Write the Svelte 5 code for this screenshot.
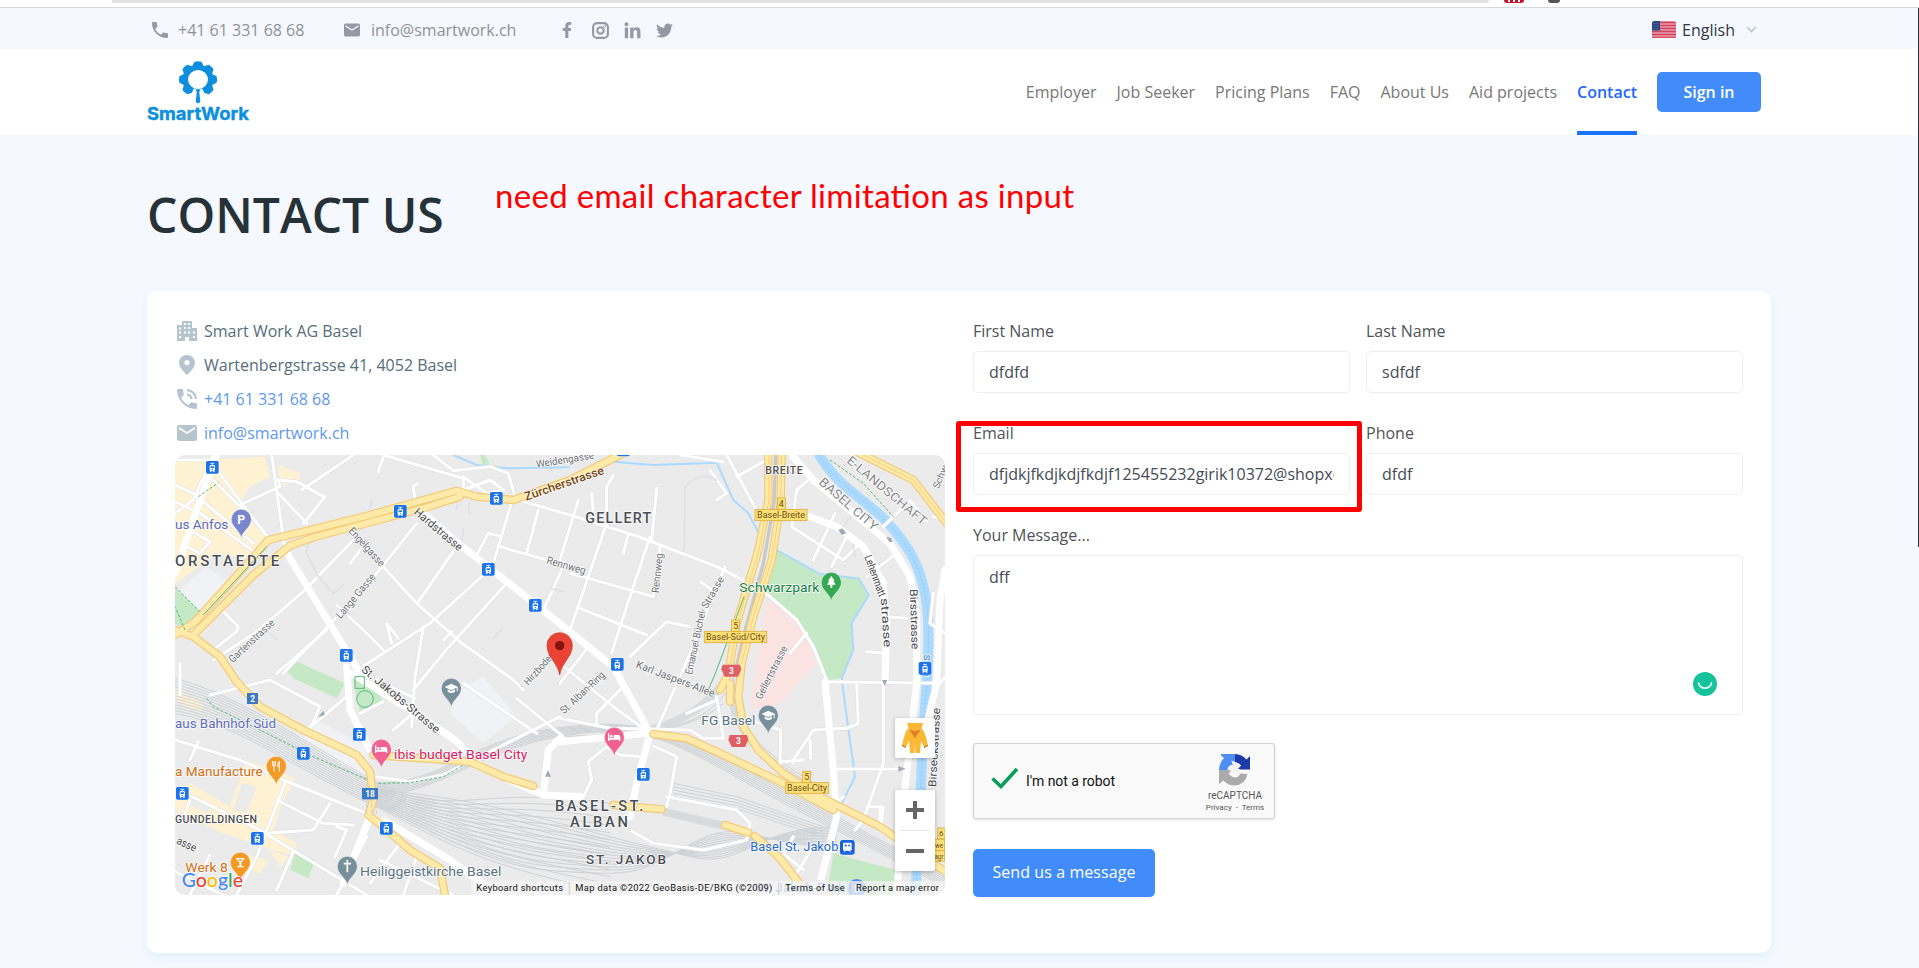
<script>
  const nav = ['Employer', 'Job Seeker', 'Pricing Plans', 'FAQ', 'About Us', 'Aid projects'];

  // Map geometry is drawn on a 2310 x 1320 canvas.
  const minor = [
    'M15 30L120 30L215 160L300 270', 'M130 90L230 190', 'M15 105L70 130L250 280', 'M15 155L90 190L260 310',
    'M15 190L70 150L130 15', 'M60 240L120 275L90 310L50 290', 'M210 165L330 110L325 90L380 95L460 140', 'M305 15L345 300',
    'M325 130L410 220', 'M395 120L550 15', 'M400 222L465 140', 'M640 15L880 85L880 130', 'M790 15L850 62L960 50L1015 70L1035 140',
    'M640 20L625 65', 'M735 150L730 110L742 100', 'M540 215L540 245L640 350L740 460L870 575L1030 690L1060 720',
    'M740 220L600 395L340 670', 'M550 270L400 425L260 545L130 630', 'M30 640L30 735', 'M150 475L205 530L200 545L135 595',
    'M470 540L320 670', 'M540 340L575 295', 'M570 655L780 520L940 375', 'M745 455L860 290', 'M760 530L735 680L725 830',
    'M640 600L580 540L500 465', 'M685 565L650 520L665 580', 'M820 570L845 545',
    'M1030 140L970 340', 'M915 325L955 250L995 260', 'M1105 180L1070 310', 'M990 290L1200 350', 'M1180 350L1120 480',
    'M1045 150L1200 195L1400 258L1640 350L1740 400L1800 440L1880 510L1930 590L1970 690', 'M1010 400L820 610L730 720',
    'M1200 370L1290 395L1450 440', 'M1225 150L1170 330', 'M1310 220L1200 540', 'M1440 260L1350 530L1325 610',
    'M1460 115L1445 270', 'M1265 130L1270 190', 'M1330 75L1310 110L1310 180', 'M1375 250L1360 310', 'M1470 290L1450 440',
    'M1230 475L1430 555', 'M1380 620L1490 515L1560 530', 'M1255 590L1170 700', 'M1665 350L1560 610L1460 840',
    'M1592 395L1640 430', 'M1670 15L1770 200L1790 190', 'M1530 15L1660 35', 'M1700 80L1790 30',
    'M1920 85L1880 120L1865 230L2020 330L2060 290', 'M1995 190L1930 330', 'M2030 260L1985 350', 'M2090 380L2180 310',
    'M2140 230L2220 150L2270 215', 'M2150 500L2210 505', 'M2090 605L2150 610', 'M1860 610L1910 550',
    'M1960 695L2310 700L2325 680', 'M2060 705L2065 820L2030 835L1930 840L1870 930L1870 940', 'M1920 870L1922 925',
    'M2140 700L2140 940L2080 1110L2055 1140', 'M1990 957L2210 957', 'M2000 1060L2020 1040', 'M2090 1070L2140 1070L2135 1120',
    'M1640 740L1660 865L1600 865L1560 840L1320 835L1170 805', 'M1170 640L1330 770L1440 850', 'M1550 790L1640 750',
    'M1280 825L1280 790L1360 710', 'M1450 888L1520 920L1500 1030L1490 1070', 'M1420 920L1350 915L1310 890L1255 935L1265 990L1240 1040',
    'M1490 1040L1700 1080L1740 1120L1730 1170L1600 1200L1450 1180L1380 1140', 'M1740 810L1832 840L1830 945', 'M1830 935L1900 930',
    'M120 735L300 690L450 770L415 850', 'M620 690L735 745', 'M15 870L210 930L340 990L590 1090', 'M85 875L60 930',
    'M15 1015L260 1135L590 1335', 'M345 1000L260 1220L200 1335', 'M320 1050L460 1120L550 1125', 'M480 1060L430 1140L290 1150',
    'M500 1130L530 1140L495 1220', 'M370 1205L320 1320', 'M590 1160L560 1220L500 1335', 'M690 1180L600 1300', 'M740 1220L700 1335',
    'M15 1265L160 1335', 'M120 1215L60 1335', 'M60 1050L40 1105', 'M630 1230L850 1335',
    'M570 790L640 755', 'M410 840L530 740', 'M880 80L950 130L1000 120L960 90L880 120', 'M1620 60L1670 130L1640 150',
    'M670 840L740 780', 'M1040 745L1180 860', 'M880 700L1100 850', 'M960 905L1170 800', 'M620 980L720 995L820 975L870 950L850 900',
    'M1870 1160L1840 1210L1900 1260', 'M1930 1190L1880 1270', 'M2325 550L2280 520L2290 430', 'M2290 200L2325 205', 'M2130 1110L2130 1070'
  ];
  const major = [
    'M345 300L500 555L590 700', 'M15 370L80 180L140 15', 'M740 170L840 260L1080 450L1200 545L1330 650L1440 850L1400 1000L1380 1100',
    'M530 650L540 780L600 900', 'M545 670L720 780L855 870L940 955L1120 1035L1230 1040', 'M600 1100L520 1300',
    'M1170 865L1135 900L1120 1035', 'M1920 200L2000 230L2080 290L2140 400L2150 520L2145 690', 'M1870 20L1930 90L2160 280L2220 380L2240 500L2240 700L2200 1060L2180 1335',
    'M1170 875L1430 850', 'M1965 695L1990 960L2000 1100L1950 1300', 'M2325 360L2310 450L2300 700L2250 900', 'M640 1110L840 1230L990 1335'
  ];
  const yellow = [
    'M15 555L75 515L180 400L295 270L420 240L600 195L860 122L920 140L1030 150L1200 90L1370 5',
    'M75 550L160 465L250 375L360 287L430 262L600 217L760 175L870 140',
    'M15 540L70 560L150 620L200 695L270 770L400 840L560 915L600 965L610 1050L595 1095L640 1130L720 1200L810 1255L825 1335',
    'M610 915L900 935L1000 980L1090 1008',
    'M1795 10L1795 150L1765 300L1700 520L1675 670L1650 720',
    'M1835 10L1832 160L1805 330L1750 500L1715 640L1705 740L1720 830L1765 900L1840 970L1950 1040L2130 1130L2325 1265',
    'M1450 852L1550 865L1650 910L1820 990L1990 1080', 'M1680 700L1680 755',
    'M1330 1065L1475 1078', 'M1665 1125L1735 1148', 'M1755 1158L1830 1225L1900 1315',
    'M2060 5L2230 90L2330 220'
  ];

  const rails = [];
  for (let i = 0; i < 13; i++) {
    const o = i * 8;
    rails.push(`M15 ${685 + o * 1.1}C200 ${735 + o * .9} 360 ${850 + o} 600 ${985 + o * .8}S900 ${1000 + i * 20} 1320 ${1060 + i * 22}`);
  }
  for (let i = 0; i < 8; i++) {
    rails.push(`M620 ${1000 + i * 5}C820 ${1000 + i * 4} 900 ${870 + i * 6} 1150 ${835 + i * 4}S1500 ${840 + i * 4} 1700 ${940 + i * 6}S2100 ${1160 + i * 4} 2325 ${1270 + i * 6}`);
  }
  for (let i = 0; i < 13; i++) {
    rails.push(`M620 ${1020 + i * 4}C800 ${1035 + i * 9} 950 ${1060 + i * 16} 1170 ${1120 + i * 12}S1400 ${1180 + i * 8} 1560 ${1220 - i * 3}S1750 ${1130 + i * 5} 2000 ${1130 + i * 5}`);
  }
  for (let i = 0; i < 5; i++) rails.push(`M1510 ${1000 + i * 10}L1700 ${1040 + i * 9}L1960 ${1130 + i * 8}`);
  rails.push('M1170 860C1400 850 1550 850 1640 760S1680 600 1690 660', 'M1190 870C1400 860 1570 840 1660 760', 'M1690 650C1690 850 1780 910 1900 990', 'M1700 720C1710 860 1800 920 1950 1010');

  const trams = [[127, 52], [691, 184], [979, 145], [955, 358], [1096, 466], [529, 616], [568, 853], [400, 910], [37, 1030], [262, 1165], [649, 1135], [1342, 643], [1420, 973], [1360, 0], [2265, 655]];

  // x, y, rotation, text, class, size, length
  const labels = [
    [15, 236, 0, 'us Anfos', 'transit', 34, 160], [15, 348, 0, 'ORSTAEDTE', 'area', 40, 313],
    [188, 640, -43, 'Gartenstrasse', 'road', 28, 175], [512, 508, -50, 'Lange Gasse', 'road', 28, 165],
    [534, 244, 48, 'Engelgasse', 'road', 28, 145], [730, 190, 40, 'Hardstrasse', 'road dark', 30, 178],
    [1068, 152, -19, 'Zürcherstrasse', 'brown', 31, 250], [1100, 53, -9, 'Weidengasse', 'road', 27, 175],
    [1128, 340, 16, 'Rennweg', 'road', 28, 120], [1466, 430, -84, 'Rennweg', 'road', 27, 120],
    [1246, 220, 0, 'GELLERT', 'area', 38, 198], [1786, 71, 0, 'BREITE', 'small', 28, 112],
    [1944, 100, 41, 'BASEL CITY', 'district', 34, 220], [2028, 35, 40, 'E-LANDSCHAFT', 'district', 32, 300],
    [2306, 118, -67, 'Schw', 'road', 26, 72], [1708, 427, 0, 'Schwarzpark', 'park', 36, 240],
    [1566, 675, -78, 'Emanuel Büchel-', 'road', 27, 200], [1611, 478, -60, 'Strasse', 'road', 27, 105],
    [1774, 750, -63, 'Gellertstrasse', 'road', 27, 175], [2083, 320, 70, 'Lehenmatt', 'road dark', 29, 130],
    [2132, 445, 86, 'strasse', 'road dark', 29, 148], [2219, 418, 88, 'Birsstrasse', 'road dark', 29, 180],
    [2275, 680, -86, 'Birs', 'water', 30, 66], [1075, 707, -48, 'Hirzbodenweg', 'road', 27, 170],
    [1182, 793, -43, 'St. Alban-Ring', 'road', 27, 170], [1396, 652, 21, 'Karl Jaspers-Allee', 'road', 28, 250],
    [572, 662, 40, 'St. Jakobs-Strasse', 'road dark', 30, 295], [15, 833, 0, 'aus Bahnhof Süd', 'transit', 34, 303],
    [15, 978, 0, 'a Manufacture', 'food', 34, 263], [15, 1119, 0, 'GUNDELDINGEN', 'small', 28, 246],
    [17, 1180, 25, 'asse', 'road dark', 30, 62], [46, 1266, 0, 'Werk 8', 'food', 34, 127],
    [672, 928, 0, 'ibis budget Basel City', 'hotel', 35, 400], [570, 1278, 0, 'Heiliggeistkirche Basel', 'place', 34, 424],
    [1594, 824, 0, 'FG Basel', 'place', 34, 162], [1155, 1084, 0, 'BASEL-ST.', 'area', 39, 265],
    [1200, 1132, 0, 'ALBAN', 'area', 39, 174], [1248, 1243, 0, 'ST. JAKOB', 'area', 36, 240],
    [1741, 1203, 0, 'Basel St. Jakob', 'station', 34, 264], [1755, 1326, 0, 'St. Jakob-Park', 'station', 34, 270],
    [2298, 1012, -87, 'Birseckstrasse', 'road dark', 29, 238]
  ];
  const exits = [[1755, 178, 156, 34, 'Basel-Breite', 27], [1822, 144, 24, 34, '4', 27], [1603, 544, 187, 34, 'Basel-Süd/City', 27], [1685, 510, 24, 34, '5', 27], [1847, 998, 128, 32, 'Basel-City', 27], [1898, 964, 24, 34, '5', 27], [2303, 1134, 22, 32, '6', 24], [2290, 1168, 34, 34, 'we', 19], [2290, 1202, 34, 32, 'agr', 19]];
  const pins = [
    [214, 208, '#7986cb', 'P'], [844, 715, '#78909c', 'cap'], [634, 898, '#f06292', 'bed'], [319, 949, '#f29926', 'fork'],
    [211, 1237, '#f29926', 'glass'], [532, 1249, '#78909c', 'cross'], [1984, 397, '#34a853', 'tree'], [1795, 796, '#78909c', 'cap'], [1333, 862, '#f06292', 'bed']
  ];
</script>

{#snippet mail(w, h)}
  <svg width={w} height={h} viewBox="2 4 20 16"><path d="M20 4H4c-1.100 0-2 .9-2 2v12c0 1.100.9 2 2 2h16c1.100 0 2-.9 2-2V6c0-1.100-.9-2-2-2zm0 4l-8 5-8-5V6l8 5 8-5z" /></svg>
{/snippet}

<div class="browser"><div class="address"></div><i class="ext red"></i><i class="ext gray"></i></div>

<div class="topbar">
  <div class="wrap bar">
    <span class="phone"><svg width="16" height="16" viewBox="3 3 18 18"><path d="M6.620 10.790c1.440 2.830 3.760 5.140 6.590 6.590l2.200-2.200c.27-.27.67-.36 1.020-.24 1.120.37 2.330.57 3.570.57.55 0 1 .45 1 1V20c0 .55-.45 1-1 1-9.390 0-17-7.610-17-17 0-.55.45-1 1-1h3.500c.55 0 1 .45 1 1 0 1.250.2 2.450.57 3.570.11.35.03.74-.25 1.020z" /></svg>+41 61 331 68 68</span>
    <span class="email">{@render mail(16, 14)}info@smartwork.ch</span>
    <span class="social">
      <svg width="10" height="16" viewBox="0 0 320 512"><path d="M279 288l14-93h-89v-60c0-25 12-50 52-50h41V7s-37-7-72-7c-73 0-121 45-121 125v70H23v93h81v224h100V288z" /></svg>
      <svg width="17" height="17" viewBox="0 0 17 17" class="line"><rect x="1.100" y="1.100" width="14.800" height="14.800" rx="4" /><circle cx="8.500" cy="8.500" r="3.200" /><circle cx="12.700" cy="4.300" r=".3" /></svg>
      <svg width="17" height="17" viewBox="0 0 448 480"><path d="M100 460H7V155h93zM54 120a58 58 0 1 1 0-116 58 58 0 0 1 0 116zM448 460h-93V308c0-34-1-79-48-79-49 0-56 38-56 77v154h-93V155h89v41h1c13-24 43-48 88-48 94 0 112 62 112 142z" /></svg>
      <svg width="17" height="17" viewBox="0 0 512 512"><path d="M459 152c0 4 0 9 0 13 0 139-105 299-298 299-59 0-114-17-160-47 8 1 16 1 25 1 49 0 94-16 130-44-46-1-85-31-98-73 6 1 13 1 20 1 9 0 19-1 28-3-48-10-84-53-84-104v-1c14 8 30 13 47 13-28-19-46-51-46-87 0-19 5-37 14-53 52 64 129 105 216 110-2-8-3-16-3-24C250 95 297 48 355 48c30 0 57 13 77 33 24-5 46-13 66-25-8 24-24 45-46 58 21-2 41-8 60-16-14 21-32 39-53 54z" /></svg>
    </span>
    <span class="lang">
      <svg width="24" height="17" viewBox="0 0 24 17"><rect width="24" height="17" rx="2.500" fill="#e98a9b" />{#each [1, 4, 7, 10, 13] as y}<path d={`M0 ${y + .5}H24`} stroke="#cf4660" stroke-width="1.200" />{/each}<path d="M0 16.300H24" stroke="#cf4660" /><path d="M0 2.500Q0 0 2.500 0H8V9.500H0z" fill="#2b477f" /><path d="M1.500 2.500H7M1.500 5H7M1.500 7.500H7" stroke="#7185ac" stroke-width=".7" stroke-dasharray="1" /></svg>
      English
      <svg width="11" height="7" viewBox="0 0 11 7" class="chev"><path d="M1 1l4.500 4.500L10 1" /></svg>
    </span>
  </div>
</div>

<header>
  <div class="wrap head">
    <svg class="logo" width="104" height="66" viewBox="0 0 104 66">
      <g transform="translate(51 21.500) scale(1.050 1)" fill="#0d8fdd">
        <circle r="12" fill="none" stroke="#0d8fdd" stroke-width="5" />
        {#each [0, 45, 90, 135, -45, -90, -135] as a}<path transform={`rotate(${a})`} d="M-6 -12.500L-3.300 -17.700Q0 -18.600 3.300 -17.700L6 -12.500z" />{/each}
        <path d="M-8 18L-4 9H4L8 18z" fill="#fff" />
        <path d="M-2.400 9.700H2.400L1.200 12.500L2.200 22.500L0 24L-2.200 22.500L-1.200 12.500z" />
      </g>
      <text x="0" y="62" textLength="102" lengthAdjust="spacingAndGlyphs">SmartWork</text>
    </svg>
    <nav>
      {#each nav as n}<a href="#top">{n}</a>{/each}
      <a href="#top" class="active">Contact</a>
      <button class="signin">Sign in</button>
    </nav>
  </div>
</header>

<section class="hero wrap"><h1>CONTACT US</h1></section>

<main class="wrap card">
  <div class="left">
    <ul>
      <li><svg width="20" height="20" viewBox="2 2 20 20"><path fill-rule="evenodd" d="M7 2h10v7h5v13h-8v-4h-4v4H2V6h5zM9 4v2h2V4zm4 0v2h2V4zM9 8v2h2V8zm4 0v2h2V8zM4 8.500v2h2v-2zm0 4v2h2v-2zm5 0v2h2v-2zm4 0v2h2v-2zm5 0v2h2v-2zM4 17v2h2v-2zm14 0v2h2v-2z" /></svg>Smart Work AG Basel</li>
      <li><svg width="20" height="20" viewBox="3 2 18 20"><path d="M12 2C7.600 2 4 5.300 4 9.700 4 15 12 22 12 22s8-7 8-12.300C20 5.300 16.400 2 12 2zm0 10.200a2.600 2.600 0 1 1 0-5.200 2.600 2.600 0 0 1 0 5.200z" /></svg>Wartenbergstrasse 41, 4052 Basel</li>
      <li class="link"><svg width="20" height="20" viewBox="3 3 18 18"><path d="M20 15.500c-1.250 0-2.450-.2-3.570-.57-.35-.11-.74-.03-1.020.24l-2.200 2.200c-2.830-1.440-5.150-3.750-6.590-6.590l2.200-2.210c.28-.26.36-.65.25-1C8.700 6.450 8.500 5.250 8.500 4c0-.55-.45-1-1-1H4c-.55 0-1 .45-1 1 0 9.390 7.610 17 17 17 .55 0 1-.45 1-1v-3.500c0-.55-.45-1-1-1zM19 12h2a9 9 0 0 0-9-9v2c3.870 0 7 3.130 7 7zm-4 0h2c0-2.760-2.240-5-5-5v2c1.660 0 3 1.340 3 3z" /></svg>+41 61 331 68 68</li>
      <li class="link">{@render mail(20, 16)}info@smartwork.ch</li>
    </ul>

    <div class="map">
      <svg width="770" height="440" viewBox="15 15 2310 1320">
        <rect x="15" y="15" width="2310" height="1320" fill="#ebebeb" />
        <g fill="#fff2d3">
          <path d="M15 35L285 20L300 80L240 110L205 165L300 275L250 330L140 310L60 370L15 400z" />
          <path d="M325 45L390 70L385 95L330 105zM15 715L100 760L90 790L15 750z" />
          <path d="M15 1020L60 1000L180 1070L230 930L375 985L340 1050L310 1140L380 1180L370 1215L310 1200L160 1150L15 1080z" />
          <path d="M235 1215L295 1230L270 1270L240 1260zM300 1200L355 1220L330 1250z" />
        </g>
        <path fill="#ebebeb" d="M215 1000L260 1010L230 1090L190 1080zM60 1035L130 1065L110 1090L50 1060z" />
        <path fill="#f0f2f5" d="M15 430L110 350L170 390L90 485zM840 790L870 720L940 680L1040 800L940 880zM400 870L440 810L590 890L600 985L520 950z" />
        <g fill="#c5e8c5">
          <path d="M15 412L90 485L45 540L15 520zM345 655L375 632L525 700L500 745L370 685zM545 665L600 690L640 755L570 790z" />
          <path d="M1820 300L1950 375L2070 385L2097 435L2045 520L2050 600L2015 685L1970 690L1945 620L1910 550L1870 500L1790 430z" />
          <path d="M1990 1210L2175 1260L2195 1335L1970 1335zM375 1210L435 1230L415 1285L360 1260zM930 15L945 15L960 45L940 50z" />
        </g>
        <path fill="#fae3e1" d="M1790 450L1870 500L1905 550L1940 640L1850 740L1800 780L1740 770L1760 640z" />
        <g fill="none" stroke="#cdd2d6" stroke-width="3">{#each rails as d}<path {d} />{/each}</g>
        <g fill="none" stroke="#d9dadc" stroke-width="24"><path d="M1290 860C1500 850 1600 780 1660 700" /><path d="M1685 740Q1700 850 1820 950" /><path d="M1480 1085L1670 1130" /></g>
        <g fill="none" stroke="#aadaff">
          <path stroke-width="6" d="M850 15L920 45L1010 55L1200 52M1330 35L1450 45L1640 38L1690 150L1735 190L1772 260M1820 300L1950 372L2065 385L2096 435L2045 520L2050 600L2015 685L2030 800L2055 980L2010 1070" />
          <path stroke-width="30" d="M1945 10C2000 110 2090 150 2150 215S2260 350 2272 480S2260 780 2255 950S2240 1200 2238 1335" />
        </g>
        <path d="M1945 15C2000 105 2090 150 2150 215S2260 350 2272 480S2260 780 2255 950S2240 1200 2238 1335" fill="none" stroke="#7fb3db" stroke-width="2" stroke-dasharray="5 7" />
        <g class="roads">
          <g stroke="#dcdee1" stroke-width="12">{#each minor as d}<path {d} />{/each}</g>
          <g stroke="#fff" stroke-width="9">{#each minor as d}<path {d} />{/each}</g>
          <g stroke="#dfe1e4" stroke-width="5"><path d="M1543 300L1545 110Q1590 60 1640 90M415 280L410 310L445 380L490 430L520 405M862 150L860 180M898 155L897 190M605 150L600 180M880 235L875 285L850 295M1140 415L1180 425M290 540L320 568M970 565L995 538M2010 250L2040 200M2050 285L2055 320" /></g>
          <g stroke="#fff" stroke-width="21">{#each major as d}<path {d} />{/each}</g>
          <path d="M1817 15L1812 160L1780 340L1720 560L1695 670" stroke="#c9c9c9" stroke-width="10" />
          <g stroke="#f3c977" stroke-width="25">{#each yellow as d}<path {d} />{/each}</g>
          <g stroke="#feeaa8" stroke-width="18">{#each yellow as d}<path {d} />{/each}</g>
          <g stroke="#f5cf7b" stroke-width="3"><path d="M1797 15L1797 150L1767 300L1702 520L1677 670M1835 15L1832 160L1805 330L1750 500L1715 640M2060 5L2230 90L2330 220" /></g>
          <path d="M590 1045V1090M605 1045V1090M620 1045V1090" stroke="#cdd2d6" stroke-width="3" stroke-dasharray="10 8" />
        </g>
        <g fill="none" stroke="#55b97b" stroke-width="3"><path stroke-dasharray="9 5" d="M110 745L130 770L260 835L430 920L595 990M625 1000L720 998L820 980L880 945M1980 30L2080 100L2170 200M85 140L145 98M15 410L90 485M45 540L15 470" /><path d="M1722 440L1700 500L1640 660L1615 720" /><path d="M100 495L290 290" /><circle cx="585" cy="747" r="25" /><rect x="555" y="680" width="28" height="35" /></g>
        <g fill="#a2a9b9"><path d="M2005 240l12 -5 12 14 -14 6zM2148 260l15 4 5 12 -10 0zM445 800l15-18 5 12-15 6z" /><path d="M2136 690h16l-8 18zM2185 948l22 8-22 9zM1125 980l9-20 9 20z" /></g>

        {#each exits as [x, y, w, h, t, s]}
          <rect {x} {y} width={w} height={h} fill="#fddf76" stroke="#d9ae3f" stroke-width="2.500" />
          <text class="exit" x={x + w / 2} y={y + h / 2 + 9} font-size={s}>{t}</text>
        {/each}
        {#each [[1684, 662], [1705, 873]] as [x, y]}
          <path d={`M${x - 26} ${y - 18}H${x + 26}L${x + 30} ${y - 4}L${x + 20} ${y + 18}H${x - 20}L${x - 30} ${y - 4}z`} fill="#df5f65" />
          <text class="shield" {x} y={y + 10}>3</text>
        {/each}
        <rect x="231" y="729" width="33" height="33" fill="#3b78c3" /><text class="shield" x="248" y="756">2</text>
        <rect x="576" y="1014" width="48" height="34" fill="#3b78c3" /><text class="shield" x="600" y="1041">18</text>

        {#each labels as [x, y, r, t, c, s, l]}
          <text class={`lab ${c}`} transform={`translate(${x} ${y}) rotate(${r})`} font-size={s * 1.13} textLength={l} lengthAdjust={c === 'area' || c === 'small' ? 'spacing' : 'spacingAndGlyphs'}>{t}</text>
        {/each}

        {#each trams as [x, y]}
          <g transform={`translate(${x} ${y})`}>
            <rect x="-20" y="-20" width="40" height="40" rx="7" fill="#fff" opacity=".6" />
            <rect x="-19" y="-19" width="38" height="38" rx="5" fill="#1a73e8" />
            <path d="M-6 -12H6M0 -12V-7" stroke="#fff" stroke-width="2.500" />
            <path d="M-6 -7H6L8 -4V8Q8 10 5 10L8 14H4L2 11H-2L-4 14H-8L-5 10Q-8 10 -8 8V-4z" fill="#fff" />
            <path d="M-5 -3H5V2H-5z" fill="#1a73e8" /><circle cx="0" cy="7" r="2" fill="#1a73e8" />
          </g>
        {/each}
        <g transform="translate(2032 1192)"><rect x="-22" y="-22" width="44" height="44" rx="8" fill="#1a63d8" /><rect x="-13" y="-14" width="26" height="24" rx="4" fill="#fff" /><path d="M-9 -9H-1V-2H-9zM2 -9H9V-2H2zM-10 15l5-6M10 15l-5-6" fill="#1a63d8" stroke="#fff" stroke-width="2" /></g>
        <circle cx="2060" cy="1315" r="28" fill="#4f8df0" /><text class="shield" x="2060" y="1326">S</text>

        {#each pins as [x, y, f, k]}
          <g transform={`translate(${x} ${y})`}>
            <path d="M0 56C-4 34 -30 24 -30 0A30 30 0 1 1 30 0C30 24 4 34 0 56z" fill={f} stroke="#fff" stroke-width="2" stroke-opacity=".6" />
            {#if k === 'P'}<text class="parking" x="0" y="13">P</text>
            {:else if k === 'cap'}<path d="M-20 -4L0 -14L20 -4L0 6zM-11 3L0 9L11 3V10Q0 18 -11 10zM16 -3H19V9H16z" fill="#fff" />
            {:else if k === 'bed'}<path d="M-19 -12H-15V2H-2V-7H12Q18 -7 18 0V11H14V7H-15V11H-19z" fill="#fff" /><circle cx="-9" cy="-3" r="4" fill="#fff" />
            {:else if k === 'fork'}<path d="M-11 -16V-5Q-11 0 -7 0V16M-7 -16V0M-3 -16V-5Q-3 0 -7 0M9 16V-15Q3 -12 4 0H9" fill="none" stroke="#fff" stroke-width="3" />
            {:else if k === 'glass'}<path d="M-14 -13H14L3 1V11H9V15H-9V11H-3V1z" fill="#fff" /><path d="M-7 -9H7L4 -5H-4z" fill={f} />
            {:else if k === 'cross'}<path d="M0 -20V18M-11 -8H11" stroke="#fff" stroke-width="5" />
            {:else}<path d="M0 -19L10 -5H6L13 7H3V16H-3V7H-13L-6 -5H-10z" fill="#fff" />{/if}
          </g>
        {/each}

        <g transform="translate(1169 587)"><path d="M0 88C-6 50 -38 35 -38 -1A38 38 0 1 1 38 -1C38 35 6 50 0 88z" fill="#ea4335" stroke="#c5372c" stroke-width="2" /><circle r="14" fill="#811411" /></g>
        <text class="google" x="35" y="1311" textLength="184" lengthAdjust="spacingAndGlyphs"><tspan fill="#4285f4">G</tspan><tspan fill="#ea4335">o</tspan><tspan fill="#fbbc04">o</tspan><tspan fill="#4285f4">g</tspan><tspan fill="#34a853">l</tspan><tspan fill="#ea4335">e</tspan></text>
        <path d="M903 1293H2325V1335H903z" fill="#f5f5f5" fill-opacity=".78" />
        <path d="M1198 1296V1335M1826 1296V1335M2041 1296V1335" stroke="#bbb" stroke-width="2" />
        <g class="legal"><text x="919" y="1323" textLength="260">Keyboard shortcuts</text><text x="1216" y="1323" textLength="591">Map data ©2022 GeoBasis-DE/BKG (©2009)</text><text x="1846" y="1323" textLength="178">Terms of Use</text><text x="2058" y="1323" textLength="249">Report a map error</text></g>
      </svg>
      <div class="controls">
        <div class="ctl man"><svg width="30" height="30" viewBox="0 0 30 30"><path d="M7 0h16l-1.500 5.500c3 2 5 10 6.500 17l-4 2-3-7-1 12.500h-4.500l-.5-9-.5 9H10L9 17.500l-3 7-4-2c1.500-7 3.500-15 6.500-17z" fill="#fbb834" /><path d="M9.500 6.500l5.500 9 5.500-9-5.500 1.500z" fill="#e0822c" /><path d="M2 22.500l4 2M28 22.500l-4 2" stroke="#9a6420" /></svg></div>
        <div class="ctl zoom"><b class="plus"></b><hr /><b></b></div>
      </div>
    </div>
  </div>

  <form>
    <div class="grid">
      <label>First Name<input value="dfdfd" /></label>
      <label>Last Name<input value="sdfdf" /></label>
      <label>Email<input value="dfjdkjfkdjkdjfkdjf125455232girik10372@shopxda.com" /></label>
      <label>Phone<input value="dfdf" /></label>
    </div>
    <label class="msg">Your Message...
      <span class="area-box">
        <textarea>dff</textarea>
        <svg class="smile" width="24" height="24" viewBox="0 0 24 24"><circle cx="12" cy="12" r="12" fill="#15c39a" /><path d="M5.500 11a6.700 6.700 0 0 0 13 0" fill="none" stroke="#d7f6ee" stroke-width="1.800" stroke-linecap="round" /></svg>
      </span>
    </label>
    <div class="captcha">
      <svg width="28" height="22" viewBox="0 0 28 22"><path d="M1.500 11.500L10 19.500L26 2" fill="none" stroke="#0a9d58" stroke-width="3.600" /></svg>
      <span>I'm not a robot</span>
      <div class="brand">
        <svg width="32" height="32" viewBox="0 0 32 32">
          <path d="M31 2V15.500H18L22 11.500Q20 8.500 16 8.500V0Q23 .3 27.500 5.500z" fill="#1c3aa9" />
          <path d="M16 0V8L12.500 6.500 14 11Q8.500 11 8.500 16H0Q.2 9 5 4L2 1.500V0z" fill="#4285f4" opacity=".93" />
          <path d="M0 16H13L9.500 19.500Q13 24 17 23.500Q20 23 21 19.500L28.500 20Q26 31 15.500 31.500Q9 31.500 4.500 26.500L0 30z" fill="#ababab" />
          <path d="M9 16Q9 12 14 11L12.500 7L16 9V8L18 8.500L17.500 12L22 11.500L19 14.500L22 16L20.500 21L16 19L13 17z" fill="#f3f3f3" />
        </svg>
        <em>reCAPTCHA</em><small>Privacy&nbsp; -&nbsp; Terms</small>
      </div>
    </div>
    <button type="button" class="send">Send us a message</button>
  </form>
</main>

<div class="mark-box"></div>
<svg class="mark-text" width="600" height="50"><text x="0" y="33" textLength="579" lengthAdjust="spacing">need email character limitation as input</text></svg>
<div class="edge"></div>

<style>
  :global(body) { background: #f5f8ff; font-family: "Open Sans", sans-serif; font-size: 16px; overflow: hidden; height: 968px; }
  * { box-sizing: border-box; }
  svg { display: block; flex: none; }
  .wrap { width: 1624px; margin-left: 147px; }
  .browser { height: 8px; background: #fff; border-bottom: 1px solid #d5d8dd; display: flex; padding-left: 112px; }
  .address { width: 1377px; height: 3px; background: #e1e1e1; border-radius: 0 0 8px 0; }
  .ext { width: 20px; height: 3px; background: linear-gradient(90deg, #c8102e 4px, #fff 4px 6px, #c8102e 6px 9px, #fff 9px 11px, #c8102e 11px 14px, #fff 14px 16px, #c8102e 16px) 0 0 / 20px 2px no-repeat #c8102e; margin-left: 15px; border-radius: 0 0 3px 3px; }
  .ext.gray { width: 12px; background: #555; margin-left: 24px; }
  .topbar { height: 41px; display: flex; align-items: center; }
  .bar { display: flex; align-items: center; height: 41px; margin-top: 2px; padding-left: 5px; color: #8f9294; }
  .bar svg { fill: #9599a3; }
  .bar span { display: flex; align-items: center; }
  .phone { width: 192px; gap: 10px; }
  .email { width: 218px; gap: 11px; }
  .social { gap: 15px; padding-top: 1px; }
  .social svg:nth-child(2) { margin-left: 5px; }
  .social .line { fill: none; stroke: #9599a3; stroke-width: 2.100; }
  .bar .lang { margin-left: auto; margin-right: 14px; gap: 6px; color: #31363f; }
  .lang .chev { fill: none; stroke: #b9c4cb; stroke-width: 1.600; margin-left: 5px; }
  header { height: 86px; background: #fff; }
  .head { height: 86px; display: flex; justify-content: space-between; }
  .logo { margin: 9px 0 0; }
  .logo text { font: 700 18px Inter, sans-serif; fill: #0d8fdd; stroke: #0d8fdd; stroke-width: .4px; }
  nav { display: flex; gap: 20px; height: 86px; margin-right: 10px; align-items: center; }
  nav a { color: #777; text-decoration: none; white-space: nowrap; line-height: 86px; height: 86px; }
  nav .active { color: #1f69ff; font-weight: 600; border-bottom: 4px solid #1a73ff; }
  button { border: 0; border-radius: 5px; background: #418bfa; color: #fff; font: 600 16px "Open Sans", sans-serif; padding: 0; }
  .signin { width: 104px; height: 40px; }
  .hero { height: 156px; display: flex; align-items: center; }
  h1 { margin: 4px 0 0; font-size: 48px; line-height: 60px; font-weight: 600; color: #263238; }
  .card { height: 662px; border-radius: 10px; background: #fff; box-shadow: 0 4px 10px #e0f1fc; padding: 23px 28px 0; display: flex; gap: 28px; }
  ul { margin: 0 0 5px; padding: 0; list-style: none; }
  li { height: 34px; display: flex; align-items: center; gap: 7px; padding-left: 2px; color: #546e7a; }
  li svg { fill: #b6c5cd; }
  li.link { color: #6098ef; }
  .map { width: 770px; height: 440px; border-radius: 10px; overflow: hidden; position: relative; }
  .roads { fill: none; stroke-linejoin: round; stroke-linecap: round; }
  .map text { font-family: Roboto, sans-serif; }
  .lab { paint-order: stroke; stroke: #fff; stroke-width: 5px; stroke-opacity: .85; stroke-linejoin: round; }
  .road { fill: #6c7075; }
  .road.dark { fill: #46494d; }
  .area, .small { fill: #4a4e54; font-weight: 500; }
  .district { fill: #85898d; }
  .transit { fill: #5c6bc0; } .park { fill: #188048; } .food { fill: #d16d12; } .hotel { fill: #d81b67; }
  .place { fill: #587382; } .station { fill: #2866cc; } .water { fill: #3f86cc; } .brown { fill: #754610; font-weight: 500; }
  .exit { fill: #69521a; text-anchor: middle; }
  .shield { fill: #fff; font-weight: 700; font-size: 25px; text-anchor: middle; }
  .parking { fill: #fff; font-weight: 700; font-size: 37px; text-anchor: middle; }
  .map .google { font: 500 58px Lato, sans-serif; paint-order: stroke; stroke: #fff; stroke-width: 4px; }
  .legal { font-size: 28px; fill: #111; }
  .controls { position: absolute; right: 10px; bottom: 24px; width: 40px; display: flex; flex-direction: column; gap: 32px; }
  .ctl { background: #fff; border-radius: 2px; box-shadow: 0 1px 4px #0004; width: 40px; }
  .man { height: 40px; display: flex; justify-content: center; align-items: center; }
  .zoom { height: 81px; display: flex; flex-direction: column; align-items: center; }
  .zoom b { width: 18px; height: 4px; background: #666; margin: 18px 0; }
  .zoom .plus { height: 18px; margin: 11px 0; background: linear-gradient(#666, #666) center / 18px 4px no-repeat, linear-gradient(#666, #666) center / 4px 18px no-repeat; }
  hr { width: 30px; border: 0; height: 1px; background: #e6e6e6; margin: 0; }
  form { width: 770px; }
  .grid { display: grid; grid-template-columns: 377px 377px; column-gap: 16px; }
  label { display: block; height: 102px; line-height: 34px; color: #505357; }
  input, textarea { display: block; width: 100%; height: 42px; margin-top: 3px; padding: 0 15px; border: 1px solid #eeeef0; border-radius: 5px; font: 16px "Open Sans", sans-serif; color: #454b54; background: #fff; outline: 0; }
  .area-box { display: block; position: relative; }
  textarea { height: 160px; resize: none; padding-top: 10px; }
  .msg { height: 225px; }
  .smile { position: absolute; right: 26px; bottom: 19px; }
  .captcha { width: 302px; height: 76px; border: 1px solid #d3d3d3; border-radius: 3px; background: #f9f9f9; box-shadow: 0 1px 3px #0002; display: flex; align-items: center; padding-left: 17px; font: 14px Roboto, sans-serif; color: #111; }
  .captcha > svg { margin: -6px 7px 0 0; }
  .captcha > span { flex: 1; letter-spacing: -.05px; }
  .brand { width: 86px; flex: none; margin: 4px -4px 0 0; display: flex; flex-direction: column; align-items: center; color: #555; }
  .brand em { font-style: normal; font-size: 10px; line-height: 10px; margin-top: 5px; }
  .brand small { font-size: 8px; line-height: 10px; margin-top: 2px; white-space: nowrap; }
  .send { display: block; width: 182px; height: 48px; margin-top: 30px; padding-bottom: 3px; font-weight: 500; letter-spacing: .08px; }
  .mark-box { position: absolute; left: 956px; top: 421px; width: 406px; height: 91px; border: 5px solid #f00; border-radius: 3px; }
  .mark-text { position: absolute; left: 495px; top: 175px; }
  .mark-text text { font: 33px Lato, sans-serif; fill: #f00; }
  .edge { position: absolute; left: 1918px; top: 8px; width: 1px; height: 539px; background: #2b2f38; }
</style>
